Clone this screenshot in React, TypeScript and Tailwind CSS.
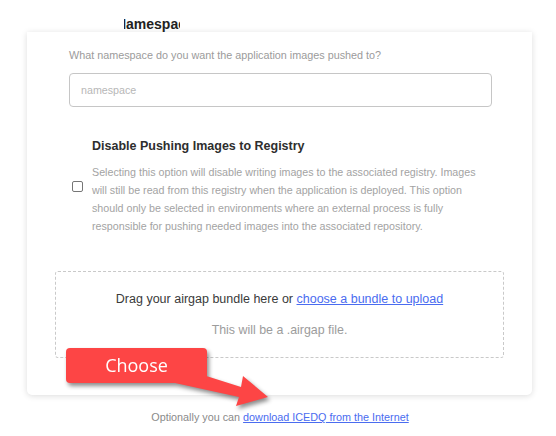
import { FC } from 'react'

const App: FC = () => {
	return (
		<div className="relative w-[556px] h-[436px] overflow-hidden bg-white pt-[17px] font-['Liberation_Sans',Arial,sans-serif]">
			<div className="ml-[124px] w-[56px] h-[15px] overflow-hidden whitespace-nowrap text-[14px] leading-[15px] font-bold text-[#222]">
				<span className="inline-block -ml-[68px]">Registry Namespace</span>
			</div>

			<div className="ml-[27px] w-[505px] rounded-b-[5px] bg-white px-[28px] pt-[15px] pb-[37px] shadow-[0_1px_6px_rgba(0,0,0,0.14)]">
				<div className="pl-[14px] pr-[12px]">
					<p className="text-[10.8px] leading-[16px] text-[#9b9b9b]">
						What namespace do you want the application images pushed to?
					</p>
					<input
						type="text"
						placeholder="namespace"
						className="mt-[10px] h-[34px] w-full rounded-[4px] border border-[#c6c6c6] px-[11px] text-[10.7px] placeholder:text-[#b7b7b7] outline-none"
					/>

					<div className="mt-[31px] flex items-center">
						<span className="ml-[3px] h-[11px] w-[11px] shrink-0 rounded-[2px] border border-[#767676] bg-white" />
						<div className="ml-[9px] w-[400px]">
							<h3 className="text-[12.5px] leading-[16px] font-bold text-[#2e2e2e]">Disable Pushing Images to Registry</h3>
							<p className="mt-[9px] text-[10.7px] leading-[18px] text-[#a3a3a3]">
								Selecting this option will disable writing images to the associated registry. Images will still be read from this registry when the application is deployed. This option should only be selected in environments where an external process is fully responsible for pushing needed images into the associated repository.
							</p>
						</div>
					</div>
				</div>

				<div className="mt-[36px] rounded-[3px] border border-dashed border-[#c9c9c9] pt-[18px] pb-[18px] text-center">
					<p className="text-[12.5px] leading-[18px] text-[#3a3a3a]">
						Drag your airgap bundle here or{' '}
						<a href="#" className="text-[#4a6cf0] underline">choose a bundle to upload</a>
					</p>
					<p className="mt-[13px] text-[12.4px] leading-[18px] text-[#9c9c9c]">This will be a .airgap file.</p>
				</div>
			</div>

			<p className="mt-[14px] pl-[4px] text-center text-[10.8px] leading-[16px] text-[#8a8a8a]">
				Optionally you can{' '}
				<a href="#" className="text-[#4a6cf0] underline">download ICEDQ from the Internet</a>
			</p>

			{/* annotation callout */}
			<div className="absolute left-[60px] top-[340px] h-[75px] w-[220px] drop-shadow-[2px_3px_2px_rgba(0,0,0,0.45)]">
				<svg width="220" height="75" className="absolute left-0 top-0">
					<polygon points="140,34 181,47 183,36 208,57 176,66 179,57 115,43" fill="#fd4545" />
				</svg>
				<div className="absolute left-[6px] top-[8px] flex h-[35px] w-[141px] items-center justify-center rounded-[4px] bg-[#fd4545] font-['Open_Sans',sans-serif] text-[18px] text-white">
					Choose
				</div>
			</div>
		</div>
	)
}

export default App
